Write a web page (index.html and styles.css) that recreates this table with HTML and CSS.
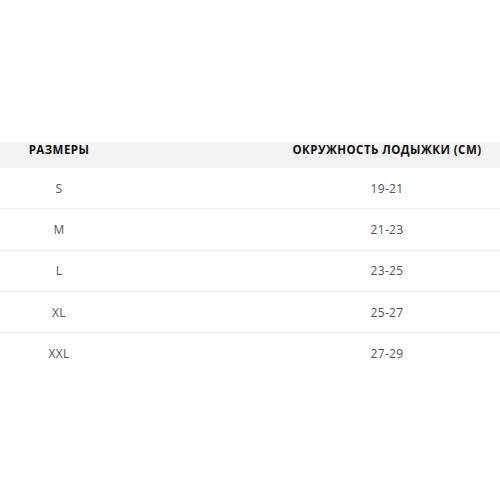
FILE: index.html
```html
<!DOCTYPE html>
<html lang="ru">
<head>
<meta charset="utf-8">
<link rel="stylesheet" href="styles.css">
</head>
<body>
<div class="page">
  <div class="table">
    <div class="row head">
      <div class="cell c1">РАЗМЕРЫ</div>
      <div class="cell c2">ОКРУЖНОСТЬ ЛОДЫЖКИ (СМ)</div>
    </div>
    <div class="row"><div class="cell c1">S</div><div class="cell c2">19-21</div></div>
    <div class="row"><div class="cell c1">M</div><div class="cell c2">21-23</div></div>
    <div class="row"><div class="cell c1">L</div><div class="cell c2">23-25</div></div>
    <div class="row"><div class="cell c1">XL</div><div class="cell c2">25-27</div></div>
    <div class="row last"><div class="cell c1">XXL</div><div class="cell c2">27-29</div></div>
  </div>
</div>
</body>
</html>
```
FILE: styles.css
```css
html, body {
  margin: 0;
  padding: 0;
  background: #ffffff;
}
.page {
  width: 500px;
  height: 500px;
  padding-top: 142px;
  box-sizing: border-box;
  font-family: "Open Sans", "Liberation Sans", sans-serif;
}
.table {
  display: flex;
  flex-direction: column;
}
.row {
  display: grid;
  grid-template-columns: 118px 1fr 226px;
  height: 41.3px;
  box-sizing: border-box;
  border-bottom: 1.5px solid #ececec;
  align-items: center;
  color: #555555;
  font-size: 12px;
  letter-spacing: 0.3px;
}
.row .c1 { grid-column: 1; text-align: center; }
.row .c2 { grid-column: 3; text-align: center; white-space: nowrap; }
.row.head {
  height: 26px;
  background: #f2f2f3;
  border-bottom: none;
  align-items: start;
  color: #111111;
  font-weight: 700;
  font-size: 11.5px;
  line-height: 15px;
  letter-spacing: 0.45px;
}
.row.last { border-bottom: none; }
```
